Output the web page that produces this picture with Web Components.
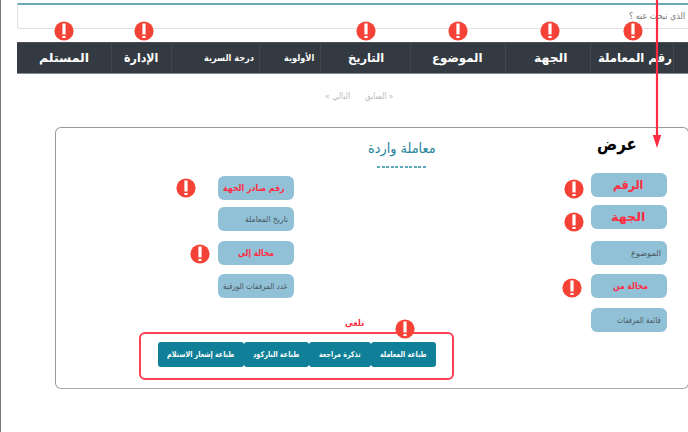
<!DOCTYPE html>
<html lang="ar"><head><meta charset="utf-8"><title>معاملة واردة</title>
<style>html,body{margin:0;background:#fff;overflow:hidden}body{width:688px;height:432px;font-family:"DejaVu Sans",sans-serif}</style></head>
<body><incoming-page></incoming-page>
<script>
const make=(name,html,init)=>customElements.define(name,class extends HTMLElement{
  constructor(){super();this.attachShadow({mode:'open'}).innerHTML=html;}
  connectedCallback(){if(init)init(this,this.shadowRoot);}
});

// One line of Arabic text, condensed or widened to a given width
make('ar-text',`<style>
:host{display:block;flex:none;direction:rtl;white-space:nowrap;line-height:20px;height:20px}
span{display:inline-block;transform-origin:100% 50%}
</style><span><slot></slot></span>`,(el,r)=>{
  const w=+el.getAttribute('w');
  el.style.width=w+'px';
  el.style.fontSize=el.getAttribute('size')+'px';
  const s=r.querySelector('span');
  s.style.transform='scaleX('+w/s.offsetWidth+')';
});

make('alert-dot',`<style>
:host{position:absolute;width:20px;height:20px;transform:translate(-50%,-50%)}svg{display:block}
</style><svg width="20" height="20" viewBox="0 0 20 20"><circle cx="10" cy="10" r="9.6" fill="#f44336"/><path d="M8.4 2.6h3.2v11H8.4zM8.4 15h3.2v2H8.4z" fill="#fff"/></svg>`,el=>{
  el.style.left=el.getAttribute('x')+'px';el.style.top=el.getAttribute('y')+'px';
});

make('search-box',`<style>
:host{display:flex;box-sizing:border-box;direction:rtl;margin-left:17px;height:26px;border-top:2px solid #69a9b9;border-left:1px solid #e0e0e0;border-bottom:1px solid #e0e0e0;border-radius:0 0 0 3px;padding:1px 3px 0 0;color:#777}
</style><slot></slot>`);

make('head-cell',`<style>
:host{display:flex;box-sizing:border-box;border-left:1px solid #41474e;align-items:center}
:host(:last-child){border-left:0}
</style><slot></slot>`,el=>{el.style.paddingRight=(el.getAttribute('pad')||0)+'px'});

make('table-head',`<style>
:host{display:grid;direction:rtl;box-sizing:border-box;margin:13px 0 0 17px;height:32px;grid-template-columns:15px 83px 85px 95px 90px 61px 88px 60px 94px;background:#343a41;border-bottom:1px solid #858b90;border-top:1px solid #4b5056;color:#fff;font-weight:bold}
</style><slot></slot>`);

make('page-nav',`<style>
:host{display:flex;direction:rtl;gap:15px;margin:12px 295px 0 0;color:#bbb}
</style><slot></slot>`);

make('field-label',`<style>
:host{display:flex;direction:rtl;box-sizing:border-box;width:76px;height:24px;border-radius:6px;background:#91c1d7;align-items:center;color:#4b5962}
:host([hot]){color:#ff2b40;font-weight:bold}
ar-text,::slotted(*){margin-top:-1px}
</style><slot></slot>`,el=>{
  el.style.paddingRight=el.getAttribute('pad')+'px';
  el.style.marginTop=el.getAttribute('gap')+'px';
});

make('print-button',`<style>
:host{display:flex;direction:rtl;box-sizing:border-box;height:25px;background:#107f98;border-radius:3px;color:#fff;font-weight:bold;align-items:center;justify-content:center}
</style><slot></slot>`,el=>{el.style.width=el.getAttribute('w')+'px'});

make('print-bar',`<style>
:host{display:flex;direction:rtl;box-sizing:border-box;width:315px;height:48px;border:2px solid #ff4050;border-radius:6px;padding:8px 16px 0 0}
</style><slot></slot>`);

make('detail-panel',`<style>
:host{display:block;box-sizing:border-box;margin:21px 0 0 55px;width:634px;height:262px;border:1px solid #999;border-bottom-color:#aaa;border-radius:6px;direction:rtl}
header{display:flex;box-sizing:border-box;height:44px;padding:6px 51px 0 0}
.title{margin:4px 161px 0 0;color:#238499}
.rule{width:50px;height:1.5px;margin:8px 9px 0 0;background:repeating-linear-gradient(90deg,#5ba9bb 0 3px,transparent 3px 4.6px)}
.big{font-weight:bold;color:#000}
main{display:flex;height:160px;padding-right:21px}
.second{margin-right:297px}
.note{color:#ff2b40;font-weight:bold;margin:-19px 324px 0 0}
print-bar{margin:-1px 234px 0 0}
</style>
<header><ar-text class="big" w="40" size="18">عرض</ar-text><div class="title"><ar-text w="68" size="14">معاملة واردة</ar-text><div class="rule"></div></div></header>
<main>
<section>
<field-label hot pad="24" gap="1"><ar-text w="30" size="12">الرقم</ar-text></field-label>
<field-label hot pad="22" gap="8"><ar-text w="34" size="12">الجهة</ar-text></field-label>
<field-label pad="6" gap="12"><ar-text w="30" size="8.5">الموضوع</ar-text></field-label>
<field-label hot pad="19" gap="9"><ar-text w="35" size="9">محالة من</ar-text></field-label>
<field-label pad="6" gap="10"><ar-text w="44" size="8.5">قائمة المرفقات</ar-text></field-label>
</section>
<section class="second">
<field-label hot pad="9" gap="4"><ar-text w="62" size="9">رقم صادر الجهة</ar-text></field-label>
<field-label pad="6" gap="7"><ar-text w="43" size="8.5">تاريخ المعاملة</ar-text></field-label>
<field-label hot pad="20" gap="10"><ar-text w="36" size="9">محالة إلى</ar-text></field-label>
<field-label pad="6" gap="9"><ar-text w="65" size="8.5">عدد المرفقات الورقية</ar-text></field-label>
</section>
</main>
<div class="note"><ar-text w="19" size="9">تلغى</ar-text></div>
<print-bar>
<print-button w="65"><ar-text w="47" size="8">طباعة المعاملة</ar-text></print-button>
<print-button w="62"><ar-text w="42" size="8">تذكرة مراجعة</ar-text></print-button>
<print-button w="65"><ar-text w="46" size="8">طباعة الباركود</ar-text></print-button>
<print-button w="86"><ar-text w="67" size="8">طباعة إشعار الاستلام</ar-text></print-button>
</print-bar>`);

make('flow-arrow',`<style>:host{position:absolute;left:652px;top:0}svg{display:block}</style>
<svg width="10" height="149" viewBox="0 0 10 149"><path d="M5 0v138" stroke="#ff2b40" stroke-width="2.2"/><path d="M.8 135h8.4L5 148z" fill="#ff2b40"/></svg>`);

make('incoming-page',`<style>
:host{display:block;position:relative;box-sizing:border-box;width:688px;height:432px;overflow:hidden;padding-top:3px}
.edge{position:absolute;left:0;top:0;width:1px;height:432px;background:#777}
</style><div class="edge"></div>
<search-box><ar-text w="56" size="9">الذي تبحث عنه ؟</ar-text></search-box>
<table-head>
<head-cell></head-cell>
<head-cell pad="1"><ar-text w="74" size="12">رقم المعاملة</ar-text></head-cell>
<head-cell pad="23"><ar-text w="33" size="12">الجهة</ar-text></head-cell>
<head-cell pad="22"><ar-text w="51" size="12">الموضوع</ar-text></head-cell>
<head-cell pad="26"><ar-text w="36" size="12">التاريخ</ar-text></head-cell>
<head-cell pad="6"><ar-text w="30" size="9">الأولوية</ar-text></head-cell>
<head-cell pad="5"><ar-text w="50" size="9">درجة السرية</ar-text></head-cell>
<head-cell pad="13"><ar-text w="34" size="12">الإدارة</ar-text></head-cell>
<head-cell pad="22"><ar-text w="50" size="12">المستلم</ar-text></head-cell>
</table-head>
<page-nav><ar-text w="28" size="9">« السابق</ar-text><ar-text w="25" size="9">التالي »</ar-text></page-nav>
<detail-panel></detail-panel>
<alert-dot x="64" y="31"></alert-dot><alert-dot x="144" y="31"></alert-dot><alert-dot x="366" y="31"></alert-dot><alert-dot x="458" y="31"></alert-dot><alert-dot x="550" y="31"></alert-dot><alert-dot x="633" y="31"></alert-dot>
<alert-dot x="186" y="188"></alert-dot><alert-dot x="200" y="254"></alert-dot><alert-dot x="574" y="189"></alert-dot><alert-dot x="574" y="222"></alert-dot><alert-dot x="572" y="288"></alert-dot><alert-dot x="405" y="329"></alert-dot>
<flow-arrow></flow-arrow>`);
</script></body></html>
